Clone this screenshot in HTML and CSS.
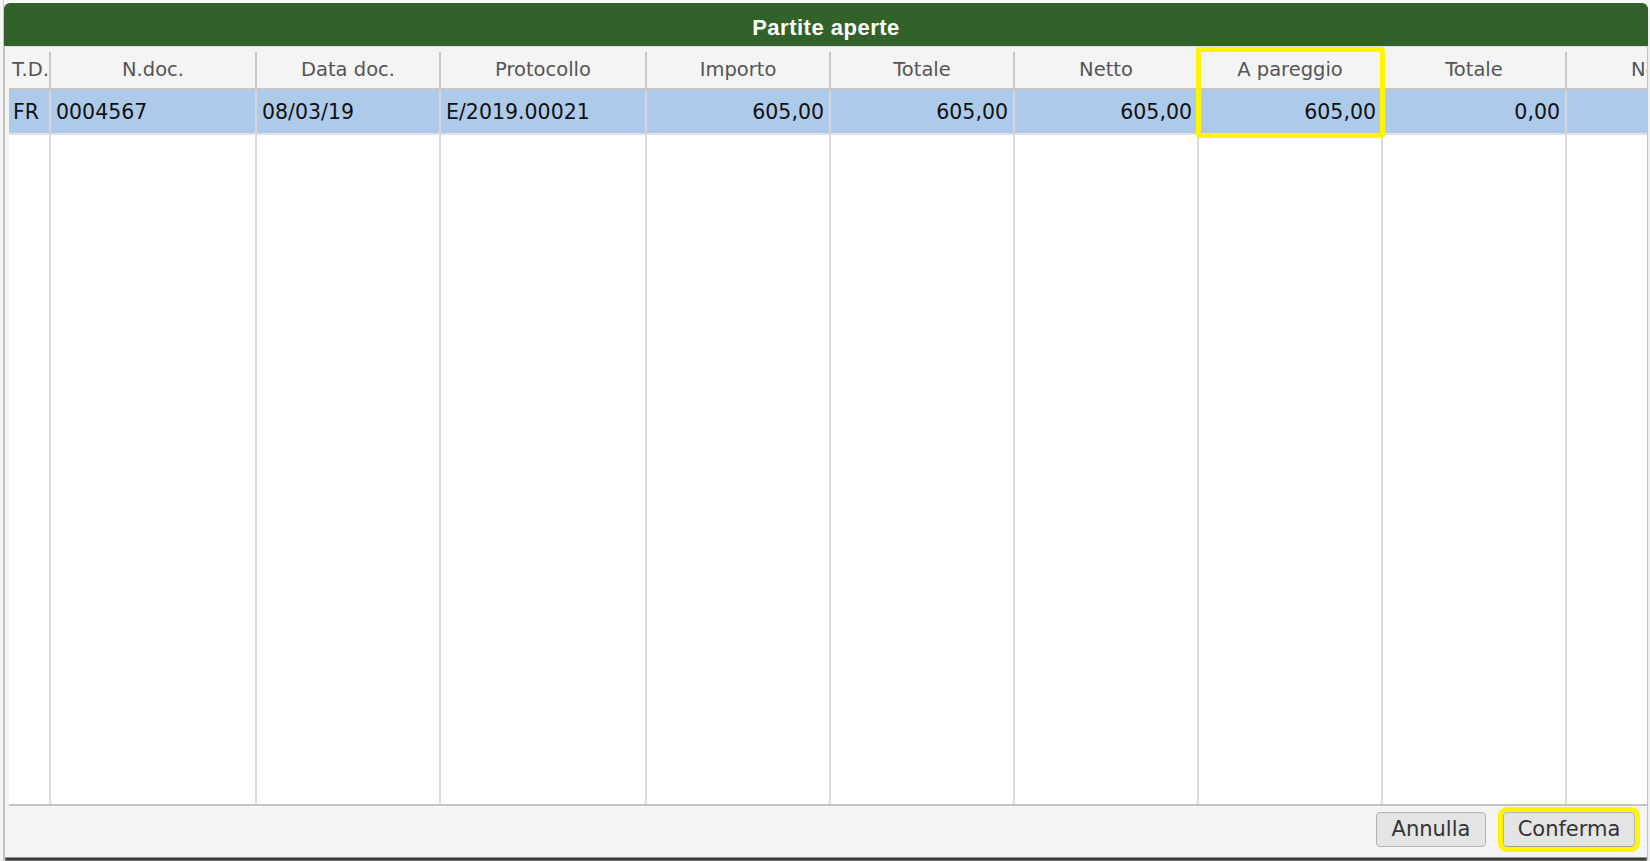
FILE: index.html
```html
<!DOCTYPE html>
<html lang="it">
<head>
<meta charset="utf-8">
<title>Partite aperte</title>
<link rel="stylesheet" href="styles.css">
</head>
<body>
<div class="screen">
  <div class="dialog">
    <div class="titlebar">Partite aperte</div>
    <div class="table">
      <div class="thead">
        <div class="th">T.D.</div>
        <div class="th">N.doc.</div>
        <div class="th">Data doc.</div>
        <div class="th">Protocollo</div>
        <div class="th">Importo</div>
        <div class="th">Totale</div>
        <div class="th">Netto</div>
        <div class="th">A pareggio</div>
        <div class="th">Totale</div>
        <div class="th">Netto</div>
      </div>
      <div class="tbody">
        <div class="td">FR</div>
        <div class="td">0004567</div>
        <div class="td">08/03/19</div>
        <div class="td">E/2019.00021</div>
        <div class="td num">605,00</div>
        <div class="td num">605,00</div>
        <div class="td num">605,00</div>
        <div class="td num">605,00</div>
        <div class="td num">0,00</div>
        <div class="td num"></div>
        <div class="fill"></div>
        <div class="fill"></div>
        <div class="fill"></div>
        <div class="fill"></div>
        <div class="fill"></div>
        <div class="fill"></div>
        <div class="fill"></div>
        <div class="fill"></div>
        <div class="fill"></div>
        <div class="fill"></div>
      </div>
      <div class="hl-col"></div>
    </div>
    <div class="footer">
      <button class="btn">Annulla</button>
      <button class="btn btn-hl">Conferma</button>
    </div>
  </div>
</div>
</body>
</html>
```

FILE: styles.css
```css
* { box-sizing: border-box; }

html, body {
  margin: 0;
  padding: 0;
  width: 1650px;
  height: 861px;
  overflow: hidden;
  background: #f3f3f3;
}

.screen {
  height: 861px;
  padding-top: 3px;
  background: linear-gradient(to right, #f5f5f5 0, #f5f5f5 3px, #cfcfcf 3px, #cfcfcf 4px, #f7f7f7 4px);
}

.dialog {
  margin-left: 4px;
  width: 1644px;
  height: 855px;
  display: flex;
  flex-direction: column;
  background: #f4f4f4;
  border-left: 1px solid #c2c2c2;
  border-right: 1px solid #c2c2c2;
  border-bottom: 1px solid #9a9a9a;
  border-radius: 6px 6px 0 0;
  box-shadow: 0 4px 2px -1px rgba(0, 0, 0, 0.78);
}

.titlebar {
  height: 44px;
  margin-left: -1px;
  margin-right: -1px;
  padding-top: 7px;
  line-height: 36px;
  text-align: center;
  background: #30622a;
  color: #ffffff;
  font-family: "Liberation Sans", Arial, sans-serif;
  font-weight: 700;
  font-size: 22px;
  letter-spacing: 0.5px;
  border-radius: 6px 6px 0 0;
  border-bottom: 1px solid #dcdcdc;
}

.table {
  flex: 1;
  margin-left: 4px;
  position: relative;
  overflow: hidden;
  display: flex;
  flex-direction: column;
  border-bottom: 2px solid #c4c4c4;
  background: #ffffff;
}

.thead,
.tbody {
  display: grid;
  grid-template-columns: 42px 206px 184px 206px 184px 184px 184px 184px 184px 184px;
  width: 1742px;
}

.thead {
  height: 43px;
  padding-top: 5px;
  background: #f4f4f4;
  border-bottom: 2px solid #c6c6c6;
}

.th {
  height: 36px;
  line-height: 36px;
  text-align: center;
  white-space: nowrap;
  overflow: hidden;
  border-right: 2px solid #c8c8c8;
  font-family: "DejaVu Sans", Verdana, sans-serif;
  font-size: 19.5px;
  color: #555555;
}

.th:first-child {
  text-align: left;
  padding-left: 3px;
}

.tbody {
  flex: 1;
  grid-template-rows: 45px 1fr;
}

.td {
  height: 45px;
  line-height: 44px;
  padding: 0 5px 0 4px;
  white-space: nowrap;
  overflow: hidden;
  background: #aecaea;
  border-right: 2px solid #d6d6d6;
  border-bottom: 2px solid #e0e0e0;
  font-family: "DejaVu Sans", Verdana, sans-serif;
  font-size: 20.5px;
  color: #111111;
}

.td:nth-child(n+2) { padding-left: 5px; }

.num { text-align: right; }

.fill {
  border-right: 2px solid #dadada;
}

.hl-col {
  position: absolute;
  left: 1187px;
  top: 0;
  width: 189px;
  height: 91px;
  border: 5px solid #fff500;
  border-radius: 4px;
}

.footer {
  height: 51px;
  padding: 6px 12px 0 0;
  display: flex;
  justify-content: flex-end;
  align-items: flex-start;
  gap: 17px;
}

.btn {
  height: 35px;
  margin: 0;
  padding: 0;
  line-height: 33px;
  background: #e4e4e4;
  border: 1px solid #b4b4b4;
  border-radius: 4px;
  font-family: "DejaVu Sans", Verdana, sans-serif;
  font-size: 21px;
  color: #333333;
  width: 110px;
}

.btn-hl {
  width: 132px;
  border-bottom-color: #9c9c9c;
  outline: 5px solid #fff500;
  outline-offset: 0;
}
```
